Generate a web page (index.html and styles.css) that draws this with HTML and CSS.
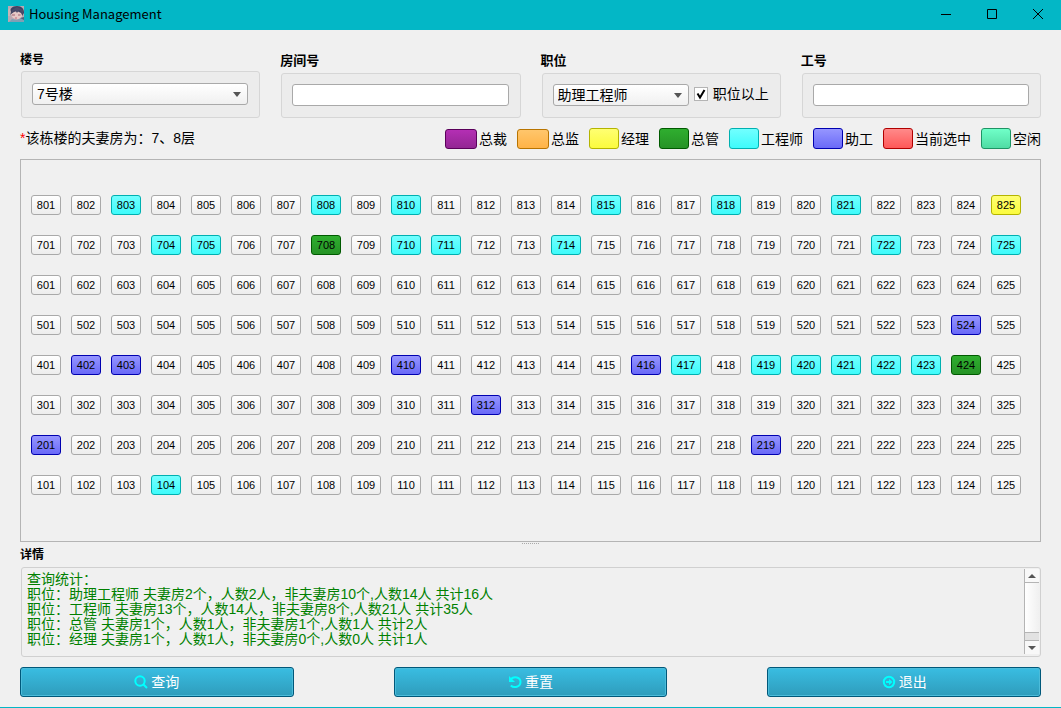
FILE: index.html
```html
<!DOCTYPE html>
<html lang="zh-CN">
<head>
<meta charset="utf-8">
<title>Housing Management</title>
<link rel="stylesheet" href="styles.css">
</head>
<body>
<header class="titlebar">
  <svg class="avatar" viewBox="0 0 16 16" aria-hidden="true">
    <rect width="16" height="16" fill="#b9a8b2"/>
    <path d="M2 8C1 3 4 0 9 0s7 3 7 7l-2 3H4z" fill="#3f4160"/>
    <path d="M0 4l2-2 1 4-1 4H0z" fill="#c9b4b4"/>
    <path d="M3 8l3-2 3-1 4 2 1 2c0 3-2 4-5 4S3 11 3 8z" fill="#e6c8c6"/>
    <path d="M3 8l4-4 2 3 2-3 4 4V4L9 1 4 4z" fill="#4b4c6b"/>
    <path d="M4 9h3M10 9h2.500" stroke="#a06070"/>
    <path d="M7 12h2" stroke="#c8687a"/>
    <path d="M1 16l3-3 5 1 4-2 3 1v3z" fill="#7f9fb4"/>
    <path d="M12 12l4-1v3z" fill="#55607c"/>
  </svg>
  <h1 class="app-name">Housing Management</h1>
  <div class="window-controls">
    <button class="win-btn" aria-label="最小化"><svg viewBox="0 0 12 12"><path d="M1 6.500h10"/></svg></button>
    <button class="win-btn" aria-label="最大化"><svg viewBox="0 0 12 12"><path d="M1.500 1.500h9v9h-9z"/></svg></button>
    <button class="win-btn" aria-label="关闭"><svg viewBox="0 0 12 12"><path d="M1 1l10 10M11 1L1 11"/></svg></button>
  </div>
</header>

<main class="content">
  <form class="filters">
    <div class="filter compact">
      <label class="filter-title" for="building">楼号</label>
      <div class="group">
        <span class="select-wrap"><select id="building" class="field"><option>7号楼</option></select></span>
      </div>
    </div>
    <div class="filter">
      <label class="filter-title" for="room">房间号</label>
      <div class="group"><input id="room" class="field" type="text"></div>
    </div>
    <div class="filter">
      <label class="filter-title" for="position">职位</label>
      <div class="group">
        <span class="select-wrap"><select id="position" class="field"><option>助理工程师</option></select></span>
        <label class="check">
          <span class="check-mark">
            <input type="checkbox" checked>
            <svg viewBox="0 0 14 14" aria-hidden="true"><path d="M3.500 6.500l2.500 4 4.500-7.500"/></svg>
          </span>
          职位以上
        </label>
      </div>
    </div>
    <div class="filter">
      <label class="filter-title" for="staff">工号</label>
      <div class="group"><input id="staff" class="field" type="text"></div>
    </div>
  </form>

  <div class="info">
    <p class="note"><span class="star">*</span>该栋楼的夫妻房为：7、8层</p>
    <ul class="legend">
      <li><i class="swatch wide purple"></i>总裁</li>
      <li><i class="swatch wide orange"></i>总监</li>
      <li><i class="swatch yellow"></i>经理</li>
      <li><i class="swatch green"></i>总管</li>
      <li><i class="swatch cyan"></i>工程师</li>
      <li><i class="swatch blue"></i>助工</li>
      <li><i class="swatch red"></i>当前选中</li>
      <li><i class="swatch mint"></i>空闲</li>
    </ul>
  </div>

  <section class="rooms" id="rooms" aria-label="房间"></section>
  <div class="splitter"></div>

  <h2 class="detail-title">详情</h2>
  <section class="detail">
    <div class="report">
      <p>查询统计：</p>
      <p>职位：助理工程师 夫妻房2个，人数2人，非夫妻房10个,人数14人 共计16人</p>
      <p>职位：工程师 夫妻房13个，人数14人，非夫妻房8个,人数21人 共计35人</p>
      <p>职位：总管 夫妻房1个，人数1人，非夫妻房1个,人数1人 共计2人</p>
      <p>职位：经理 夫妻房1个，人数1人，非夫妻房0个,人数0人 共计1人</p>
    </div>
    <div class="scrollbar">
      <button class="arrow up" aria-label="向上滚动"></button>
      <div class="thumb"></div>
      <div class="groove"></div>
      <button class="arrow down" aria-label="向下滚动"></button>
    </div>
  </section>

  <div class="actions">
    <button class="action"><svg viewBox="0 0 14 14"><circle cx="6" cy="6" r="4.700"/><path d="M9.500 9.500L13 13"/></svg>查询</button>
    <button class="action"><svg viewBox="0 0 14 14"><path d="M3 4C6 .800 12.500 2 12.500 7S6 13.500 2.800 10.500"/><path class="fill" d="M1 1v6h6z"/></svg>重置</button>
    <button class="action"><svg viewBox="0 0 14 14"><circle cx="7" cy="7" r="5.200"/><path class="fill" d="M4 6h3V4l3.500 3L7 10V8H4z"/></svg>退出</button>
  </div>
</main>
<script src="rooms.js"></script>
</body>
</html>
```
FILE: styles.css
```css
* { box-sizing: border-box; }

body {
  margin: 0;
  min-height: 100vh;
  display: flex;
  flex-direction: column;
  background: #f0f0f0;
  border-bottom: 1px solid #03b7c6;
  color: #000;
  font: 14px/16px "Liberation Sans", "Noto Sans CJK SC", sans-serif;
}

h1, h2, p, ul { margin: 0; padding: 0; }
button, input, select { font: inherit; color: inherit; margin: 0; }

.titlebar {
  height: 30px;
  display: flex;
  align-items: center;
  padding: 0 0 2px 8px;
  background: #03b7c6;
}
.avatar { width: 16px; height: 16px; margin-right: 5px; }
.app-name { font: 13px/18px "Noto Sans CJK SC", sans-serif; flex: 1; }
.window-controls { display: flex; }
.win-btn {
  width: 46px;
  height: 28px;
  padding: 0;
  border: 0;
  background: none;
  display: grid;
  place-items: center;
}
.win-btn svg { width: 12px; height: 12px; fill: none; stroke: #000; }

.content {
  flex: 1;
  display: flex;
  flex-direction: column;
  padding: 20px 20px 10px;
}

.filters { display: grid; grid-template-columns: 1fr 1fr 1fr 1fr; gap: 20px; }
.filter { display: flex; flex-direction: column; }
.filter-title { font-size: 13px; font-weight: bold; line-height: 21px; padding-bottom: 2px; }
.compact .filter-title { font-size: 12px; padding-bottom: 0; }
.group {
  flex: 1;
  display: flex;
  align-items: center;
  gap: 5px;
  min-height: 45px;
  margin-left: 1px;
  padding: 0 11px 1px 10px;
  border: 1px solid #d6d6d6;
  border-radius: 3px;
  background: #ececec;
}
.field {
  width: 100%;
  height: 22px;
  padding: 0 4px;
  border: 1px solid #a9a9a9;
  border-radius: 3px;
  background: #fff;
  outline: 0;
}
.select-wrap { flex: 1; display: flex; position: relative; }
.select-wrap select { appearance: none; background: linear-gradient(#fff, #f0f0f0); }
.select-wrap::after {
  content: "";
  position: absolute;
  right: 7px;
  top: 9px;
  border: 4px solid transparent;
  border-top: 5px solid #555;
  border-bottom: 0;
  pointer-events: none;
}
.check { display: flex; align-items: center; gap: 5px; padding-bottom: 2px; }
.check-mark { display: grid; }
.check-mark > * { grid-area: 1 / 1; width: 14px; height: 14px; }
.check-mark input { appearance: none; background: #fff; border: 1px solid #b4b4b4; }
.check-mark svg { fill: none; stroke: #000; stroke-width: 2; pointer-events: none; }

.info {
  display: flex;
  justify-content: space-between;
  align-items: center;
  height: 41px;
}
.note { padding-bottom: 2px; }
.star { color: #f00; }
.legend { display: flex; gap: 10px; list-style: none; }
.legend li { display: flex; align-items: center; gap: 2px; }
.swatch { width: 30px; height: 21px; border: 1px solid; border-radius: 3px; }
.swatch.wide { width: 32px; height: 20px; }

.rooms {
  flex: 1;
  display: flex;
  flex-direction: column;
  gap: 20px;
  padding: 35px 19px 35px 10px;
  border: 1px solid #b4b4b4;
}
.floor { display: flex; justify-content: space-between; }
.room {
  width: 30px;
  height: 20px;
  padding: 0;
  border: 1px solid #a9a9a9;
  border-radius: 3px;
  font-size: 11px;
  line-height: 18px;
}
.vacant { background: linear-gradient(#fff, #ededed); }

.purple { background: linear-gradient(#b42fb4, #932693); border-color: #5a005a; }
.orange { background: linear-gradient(#ffc66c, #ffb347); border-color: #b87400; }
.yellow { background: linear-gradient(#ffff72, #fbfb3e); border-color: #b4b400; }
.green { background: linear-gradient(#2fae2f, #269326); border-color: #005a00; }
.cyan { background: linear-gradient(#72ffff, #3efbfb); border-color: #00b0b0; }
.blue { background: linear-gradient(#9696ff, #6a6af8); border-color: #0000b0; }
.red { background: linear-gradient(#ff8a8a, #ff5858); border-color: #b00000; }
.mint { background: linear-gradient(#70ffc8, #50dca4); border-color: #1e9464; }

.splitter {
  align-self: center;
  width: 17px;
  height: 2px;
  border-bottom: 1px dotted #aaa;
}

.detail-title { font-size: 12px; line-height: 23px; }
.detail {
  display: flex;
  height: 90px;
  margin-left: 1px;
  border: 1px solid #d0d0d0;
  border-radius: 3px;
}
.report { flex: 1; padding: 4px 5px; color: #008000; line-height: 15px; }
.scrollbar {
  width: 15px;
  margin: 1px 1px 2px 0;
  display: flex;
  flex-direction: column;
  border-left: 1px solid #b4b4b4;
}
.arrow { height: 14px; padding: 0; border: 0; background: #f8f8f8; display: grid; place-items: center; }
.arrow::before { content: ""; border: 4px solid transparent; }
.arrow.up { border-bottom: 1px solid #b4b4b4; }
.up::before { border-bottom-color: #555; border-top: 0; }
.arrow.down { border-top: 1px solid #b4b4b4; }
.down::before { border-top-color: #555; border-bottom: 0; }
.thumb { flex: 1; background: linear-gradient(90deg, #fff, #f0f0f0); border-bottom: 1px solid #b4b4b4; }
.groove { height: 7px; background: #e2e2e2; }

.actions { display: grid; grid-template-columns: 1fr 1fr 1fr; gap: 100px; padding-top: 10px; }
.action {
  height: 30px;
  display: flex;
  align-items: center;
  justify-content: center;
  gap: 3px;
  border: 1px solid #00587a;
  border-radius: 3px;
  background: linear-gradient(#39bde2, #2f9cbb);
  box-shadow: inset 0 0 0 1px #4cbcda;
  color: #fff;
}
.action svg { width: 14px; height: 14px; fill: none; stroke: #00ffff; stroke-width: 2; }
.action .fill { fill: #00ffff; stroke: none; }
```
FILE: rooms.js
```js
const occupied = {
  cyan: [803, 808, 810, 815, 818, 821, 704, 705, 710, 711, 714, 722, 725,
         417, 419, 420, 421, 422, 423, 104],
  blue: [524, 402, 403, 410, 416, 312, 201, 219],
  green: [708, 424],
  yellow: [825]
};

const panel = document.getElementById("rooms");
for (let floor = 8; floor >= 1; floor--) {
  const row = document.createElement("div");
  row.className = "floor";
  for (let n = 1; n <= 25; n++) {
    const number = floor * 100 + n;
    const state = Object.keys(occupied).find(key => occupied[key].includes(number));
    const button = document.createElement("button");
    button.className = "room " + (state || "vacant");
    button.textContent = number;
    row.append(button);
  }
  panel.append(row);
}
```
